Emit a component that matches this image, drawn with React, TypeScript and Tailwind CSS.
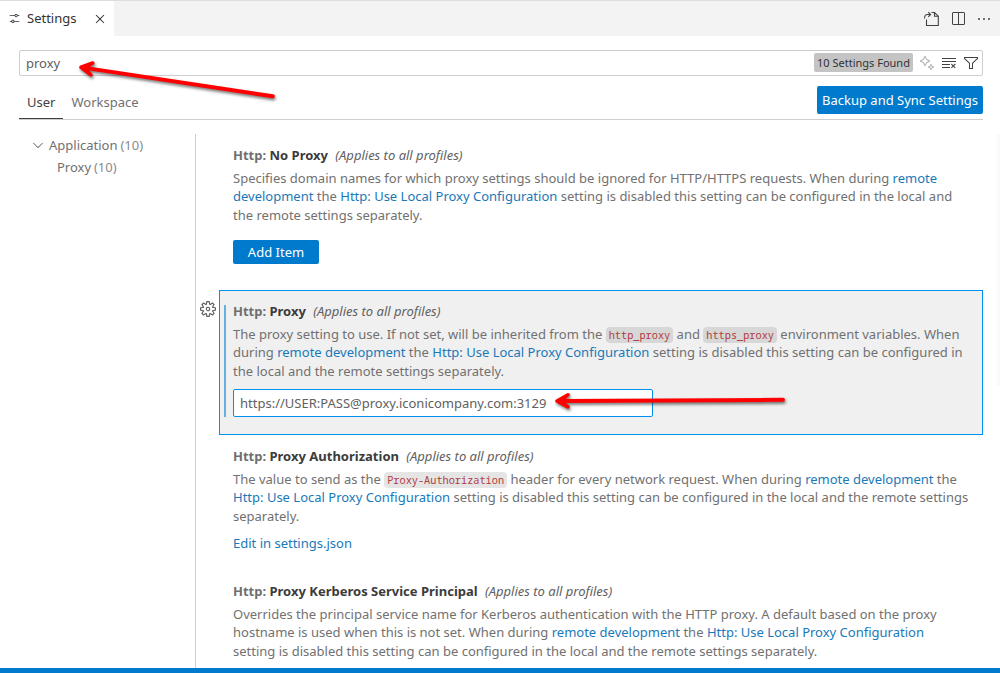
import React from "react";
import {
  VscChevronDown,
  VscClearAll,
  VscClose,
  VscEllipsis,
  VscFilter,
  VscSettings,
  VscSettingsGear,
  VscSparkle,
} from "react-icons/vsc";

function GoToFileIcon() {
  return (
    <svg className="size-4" viewBox="0 0 16 16" fill="none" stroke="currentColor" strokeWidth="1.1">
      <path d="M1.5 7.5C1.5 5 2.5 3.5 4.5 3.5H7.3" />
      <path d="M5.3 1.2L7.6 3.5L5.3 5.8" />
      <path d="M8.5 1.5H11.5L15.3 5.2V14.5H3.5V8.5" />
      <path d="M11.5 1.5V5.3H15.3" />
    </svg>
  );
}

function SplitIcon() {
  return (
    <svg className="size-4" viewBox="0 0 16 16" fill="currentColor">
      <path
        fillRule="evenodd"
        clipRule="evenodd"
        d="M14 1H3L2 2v11l1 1h11l1-1V2l-1-1zM8 13H3V2h5v11zm6 0H9V2h5v11z"
      />
    </svg>
  );
}

function Link({ children }: { children: React.ReactNode }) {
  return <a className="text-[#1979b9]">{children}</a>;
}

function Code({ children }: { children: React.ReactNode }) {
  return (
    <code className="rounded-[4px] bg-black/10 px-[3px] py-px font-['Noto_Sans_Mono','DejaVu_Sans_Mono',monospace] text-[10.25px] text-[#b03a3e]">
      {children}
    </code>
  );
}

function Setting({
  name,
  className,
  lines,
  children,
}: {
  name: string;
  className: string;
  lines: React.ReactNode[];
  children?: React.ReactNode;
}) {
  return (
    <section className={`shrink-0 border pt-[11px] pl-[13px] ${className}`}>
      <h2 className="h-[18px] leading-[18px] font-bold text-[#6f6f6f]">
        Http: <span className="text-[#3b3b3b]">{name}</span>
        <span className="ml-[7.3px] font-normal text-[#616161] italic">(Applies to all profiles)</span>
      </h2>
      <div className="mt-[5px] grid h-[55px] grid-rows-[18px_19px_18px] leading-[18px] text-[#717171]">
        {lines.map((line, i) => (
          <div key={i} className="h-[18px]">
            {line}
          </div>
        ))}
      </div>
      {children}
    </section>
  );
}

function Arrow({ className, angle, length }: { className: string; angle: number; length: number }) {
  return (
    <svg
      className={`pointer-events-none absolute overflow-visible ${className}`}
      width="1"
      height="1"
      style={{ filter: "drop-shadow(1.5px 2px 1.5px rgba(0,0,0,.55))" }}
    >
      <g transform={`rotate(${angle})`} fill="none" stroke="#ff0000" strokeLinecap="round" strokeLinejoin="round">
        <path d={`M6 0H${length}`} strokeWidth="4" />
        <path d="M13 -6L2 0L13 6" strokeWidth="3.6" />
        <path d="M2 0L12 -4L9 0L12 4Z" fill="#ff0000" strokeWidth="1" />
      </g>
    </svg>
  );
}

export default function App() {
  return (
    <main className="relative flex h-[673px] w-[1000px] flex-col overflow-hidden bg-white font-['Noto_Sans',sans-serif] text-[13px] whitespace-nowrap text-[#616161]">
      <header className="flex h-9 shrink-0 items-stretch border-t border-[#dddddd] bg-[#f3f3f3]">
        <div className="flex w-[114px] items-center bg-white pl-[8px] text-[#333333]">
          <VscSettings className="mr-[6px] size-[13px]" />
          <span>Settings</span>
          <VscClose className="ml-[16px] size-4" />
        </div>
        <div className="ml-auto flex items-center gap-[11px] pt-px pr-[8px] text-[#424242]">
          <GoToFileIcon />
          <SplitIcon />
          <VscEllipsis className="-ml-px size-4" />
        </div>
      </header>

      <div className="mt-[14px] ml-[19px] flex h-[26px] w-[964px] shrink-0 items-center rounded-[2px] border border-[#cecece] pl-[6px]">
        <span className="pt-[2px]">proxy</span>
        <span className="mb-px ml-auto flex h-[19px] w-[99px] items-center justify-center rounded-[2px] bg-[#c4c4c4] pt-px text-[11px] text-[#333333]">
          10 Settings Found
        </span>
        <div className="mr-[3px] ml-[6px] flex items-center gap-[6px] text-[#424242]">
          <VscSparkle className="size-4 opacity-40" />
          <VscClearAll className="size-4" />
          <VscFilter className="size-4" />
        </div>
      </div>

      <nav className="ml-[19px] flex h-[44px] w-[964px] shrink-0 border-b border-[#cecece]">
        <span className="h-[43px] w-[44px] border-b border-[#424242] pt-[17px] pl-[8px] text-[#424242]">User</span>
        <span className="ml-[8.5px] pt-[17px] text-[#717171]">Workspace</span>
        <button className="mt-[10px] ml-auto h-7 w-[166px] rounded-[2px] bg-[#007acc] pt-[2px] text-white">
          Backup and Sync Settings
        </button>
      </nav>

      <div className="mt-[14px] flex h-[534px] shrink-0">
        <aside className="w-[196px] border-r border-[#cecece] leading-[22px] text-[#717171]">
          <div className="flex h-[22px] items-center pl-[30px]">
            <VscChevronDown className="mr-[3px] size-4" />
            <span>
              Application <span className="-ml-[0.5px] text-[#8b8b8b]">(10)</span>
            </span>
          </div>
          <div className="h-[22px] pl-[57px]">
            Proxy <span className="-ml-[0.5px] text-[#8b8b8b]">(10)</span>
          </div>
        </aside>
        <div className="relative ml-[23px] flex w-[764px] flex-col">
          <Setting
            name="No Proxy"
            className="h-[156px] border-transparent"
            lines={[
              <>
                Specifies domain names for which proxy settings should be ignored for HTTP/HTTPS requests. When during{" "}
                <Link>remote</Link>
              </>,
              <>
                <Link>development</Link> the <Link>Http: Use Local Proxy Configuration</Link> setting is disabled this
                setting can be configured in the local and
              </>,
              "the remote settings separately.",
            ]}
          >
            <button className="mt-[16px] h-6 w-[86px] rounded-[2px] bg-[#007acc] pt-[2px] text-white">Add Item</button>
          </Setting>
          <VscSettingsGear className="absolute top-[167px] left-[-19px] size-4 text-[#616161]" />
          <Setting
            name="Proxy"
            className="relative h-[145px] border-[#0090f1] bg-[#f0f0f0]"
            lines={[
              <>
                The proxy setting to use. If not set, will be inherited from the <Code>http_proxy</Code> and{" "}
                <Code>https_proxy</Code> environment variables. When
              </>,
              <>
                during <Link>remote development</Link> the <Link>Http: Use Local Proxy Configuration</Link> setting is
                disabled this setting can be configured in
              </>,
              "the local and the remote settings separately.",
            ]}
          >
            <i className="absolute top-[14px] left-[4px] h-[112px] w-[2px] bg-[#66afe0]" />
            <div className="mt-[9px] flex h-[28px] w-[420px] items-center rounded-[2px] border border-[#0090f1] bg-white pt-[2px] pl-[6px] text-[#616161]">
              https://USER:PASS@proxy.iconicompany.com:3129
            </div>
          </Setting>
          <Setting
            name="Proxy Authorization"
            className="h-[135px] border-transparent"
            lines={[
              <>
                The value to send as the <Code>Proxy-Authorization</Code> header for every network request. When during{" "}
                <Link>remote development</Link> the
              </>,
              <>
                <Link>Http: Use Local Proxy Configuration</Link> setting is disabled this setting can be configured in
                the local and the remote settings
              </>,
              "separately.",
            ]}
          >
            <a className="mt-[9px] block leading-[18px] text-[#1979b9]">Edit in settings.json</a>
          </Setting>
          <Setting
            name="Proxy Kerberos Service Principal"
            className="h-[98px] border-transparent"
            lines={[
              "Overrides the principal service name for Kerberos authentication with the HTTP proxy. A default based on the proxy",
              <>
                hostname is used when this is not set. When during <Link>remote development</Link> the{" "}
                <Link>Http: Use Local Proxy Configuration</Link>
              </>,
              "setting is disabled this setting can be configured in the local and the remote settings separately.",
            ]}
          />
        </div>
        <div className="ml-auto h-[252px] w-[3px] bg-[#fafafa]" />
      </div>
      <footer className="h-[5px] shrink-0 bg-[#007acc]" />
      <Arrow className="top-[67px] left-[79px]" angle={8.6} length={196} />
      <Arrow className="top-[401px] left-[555px]" angle={-0.3} length={228} />
    </main>
  );
}
